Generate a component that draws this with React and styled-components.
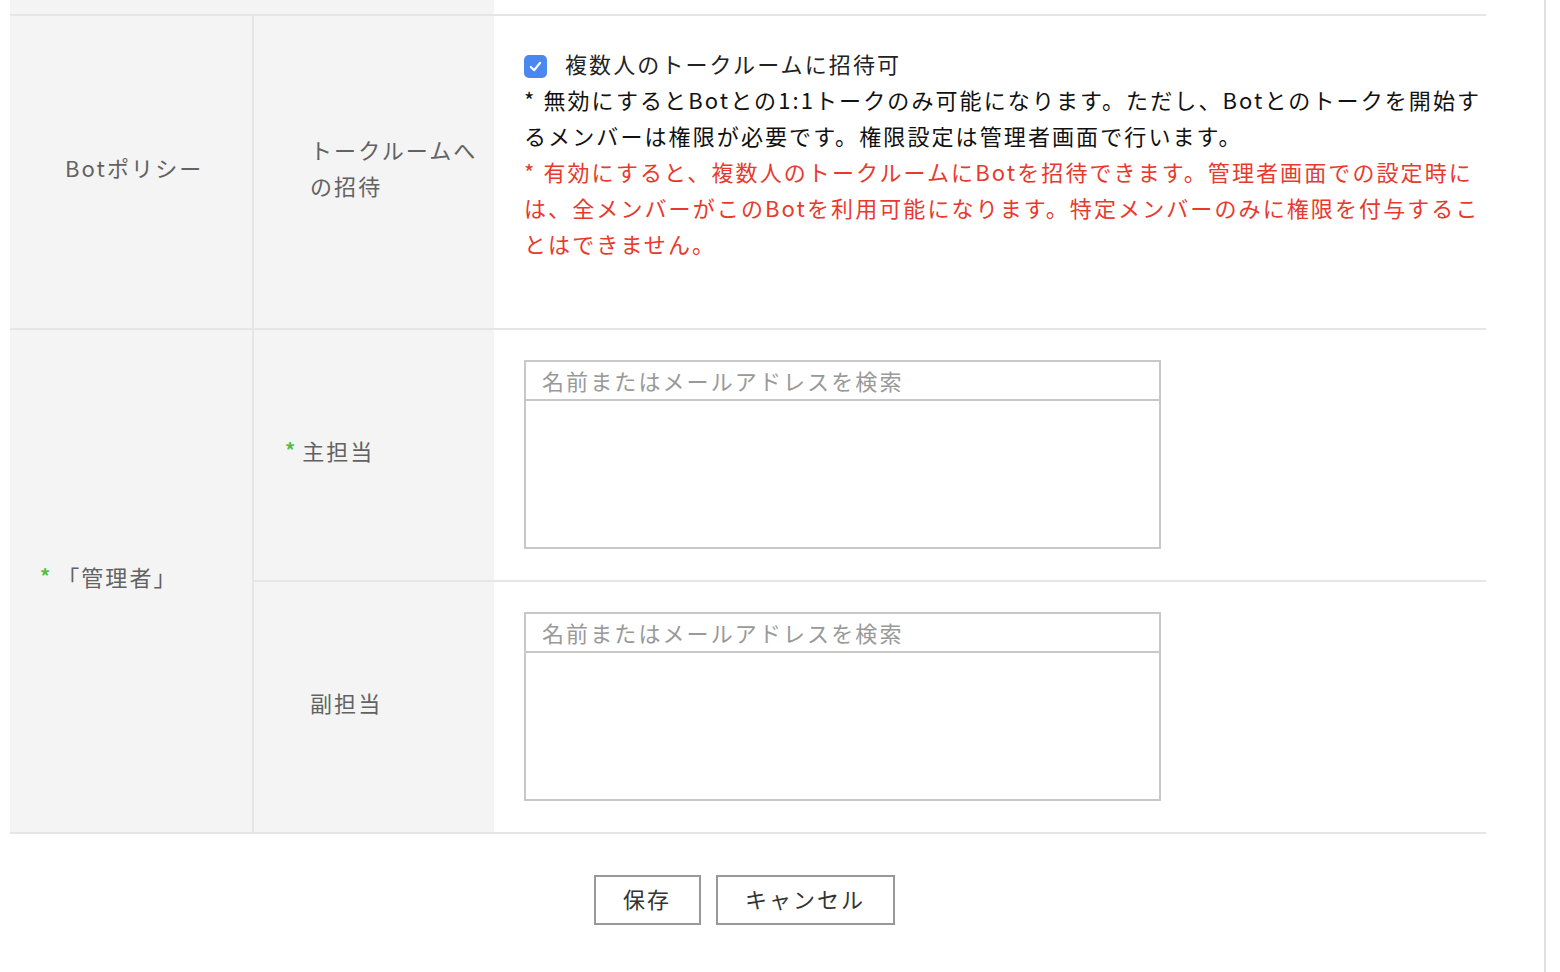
import React from 'react';
import styled, { createGlobalStyle } from 'styled-components';

const GlobalStyle = createGlobalStyle`
  html, body {
    margin: 0;
    padding: 0;
    background: #fff;
  }
  body {
    font-family: 'Noto Sans CJK JP', 'Noto Sans', sans-serif;
    font-size: 22px;
    letter-spacing: 2.1px;
  }
`;

const Page = styled.div`
  width: 1546px;
  min-height: 972px;
  border-right: 2px solid #e0e0e0;
  padding-left: 10px;
  box-sizing: border-box;
`;

const Table = styled.div`
  display: grid;
  grid-template-columns: 244px 240px 992px;
  width: 1476px;
`;

const TopStrip = styled.div`
  grid-column: ${(p) => p.$span};
  height: 14px;
  background: ${(p) => (p.$gray ? '#f4f4f4' : '#fff')};
  border-bottom: 2px solid #e6e6e6;
`;

const Label = styled.div`
  grid-row: ${(p) => p.$rows || 'auto'};
  background: #f4f4f4;
  border-bottom: 2px solid #e6e6e6;
  border-right: ${(p) => (p.$divider ? '2px solid #e6e6e6' : 'none')};
  display: flex;
  align-items: center;
  padding: 0 8px 10px ${(p) => p.$indent}px;
  color: #626262;
  line-height: 36px;
`;

const Required = styled.span`
  color: #52bd43;
  font-size: 20px;
  font-weight: 700;
  margin-left: -25px;
  margin-right: 7px;
  letter-spacing: 0;
  line-height: 1;
  align-self: center;
  margin-top: 0;
`;

const Content = styled.div`
  border-bottom: 2px solid #e6e6e6;
  padding: ${(p) => p.$pad};
  line-height: 36px;
  color: #111;
`;

const CheckRow = styled.label`
  display: flex;
  align-items: center;
  gap: 18px;
  color: #222;
`;

const CheckBox = styled.span`
  width: 23px;
  height: 23px;
  border-radius: 5px;
  background: #4a87ee;
  display: flex;
  align-items: center;
  justify-content: center;
  flex-shrink: 0;
  margin-top: 6px;
`;

const Note = styled.div`
  color: ${(p) => (p.$warn ? '#e8392e' : '#111')};
  white-space: nowrap;
`;

const SearchBox = styled.div`
  width: 637px;
  height: 189px;
  border: 2px solid #c8c8c8;
  box-sizing: border-box;
  display: flex;
  flex-direction: column;
`;

const SearchInput = styled.div`
  height: 37px;
  border-bottom: 2px solid #c8c8c8;
  padding-left: 16px;
  line-height: 36px;
  color: #999;
`;

const Buttons = styled.div`
  width: 1476px;
  display: flex;
  justify-content: center;
  gap: 15px;
  padding: 41px 0 0;
  box-sizing: border-box;
  transform: translateX(-4px);
`;

const Button = styled.button`
  height: 50px;
  width: ${(p) => p.$w}px;
  border: 2px solid #999;
  background: #fff;
  font-family: inherit;
  font-size: 22px;
  letter-spacing: 2px;
  color: #333;
  padding: 0 0 4px;
  cursor: pointer;
`;

function Check() {
  return (
    <CheckBox>
      <svg width="15" height="15" viewBox="0 0 16 16">
        <path d="M3 8.5 L6.5 12 L13 4" fill="none" stroke="#fff" strokeWidth="2.2" strokeLinecap="round" strokeLinejoin="round" />
      </svg>
    </CheckBox>
  );
}

export default function App() {
  return (
    <>
      <GlobalStyle />
      <Page>
        <Table>
          <TopStrip $span="1 / 3" $gray />
          <TopStrip $span="3 / 4" />

          <Label $divider $indent={55}>Botポリシー</Label>
          <Label $indent={56}>トークルームへの招待</Label>
          <Content $pad="29px 6px 67px 30px">
            <CheckRow>
              <Check />
              複数人のトークルームに招待可
            </CheckRow>
            <Note>* 無効にするとBotとの1:1トークのみ可能になります。ただし、Botとのトークを開始す</Note>
            <Note>るメンバーは権限が必要です。権限設定は管理者画面で行います。</Note>
            <Note $warn>* 有効にすると、複数人のトークルームにBotを招待できます。管理者画面での設定時に</Note>
            <Note $warn>は、全メンバーがこのBotを利用可能になります。特定メンバーのみに権限を付与するこ</Note>
            <Note $warn>とはできません。</Note>
          </Content>

          <Label $rows="span 2" $divider $indent={55}>
            <Required>*</Required>「管理者」
          </Label>
          <Label $indent={56}>
            <Required>*</Required>主担当
          </Label>
          <Content $pad="30px 0 31px 30px">
            <SearchBox>
              <SearchInput>名前またはメールアドレスを検索</SearchInput>
            </SearchBox>
          </Content>
          <Label $indent={56}>副担当</Label>
          <Content $pad="30px 0 31px 30px">
            <SearchBox>
              <SearchInput>名前またはメールアドレスを検索</SearchInput>
            </SearchBox>
          </Content>
        </Table>
        <Buttons>
          <Button $w={107}>保存</Button>
          <Button $w={179}>キャンセル</Button>
        </Buttons>
      </Page>
    </>
  );
}
